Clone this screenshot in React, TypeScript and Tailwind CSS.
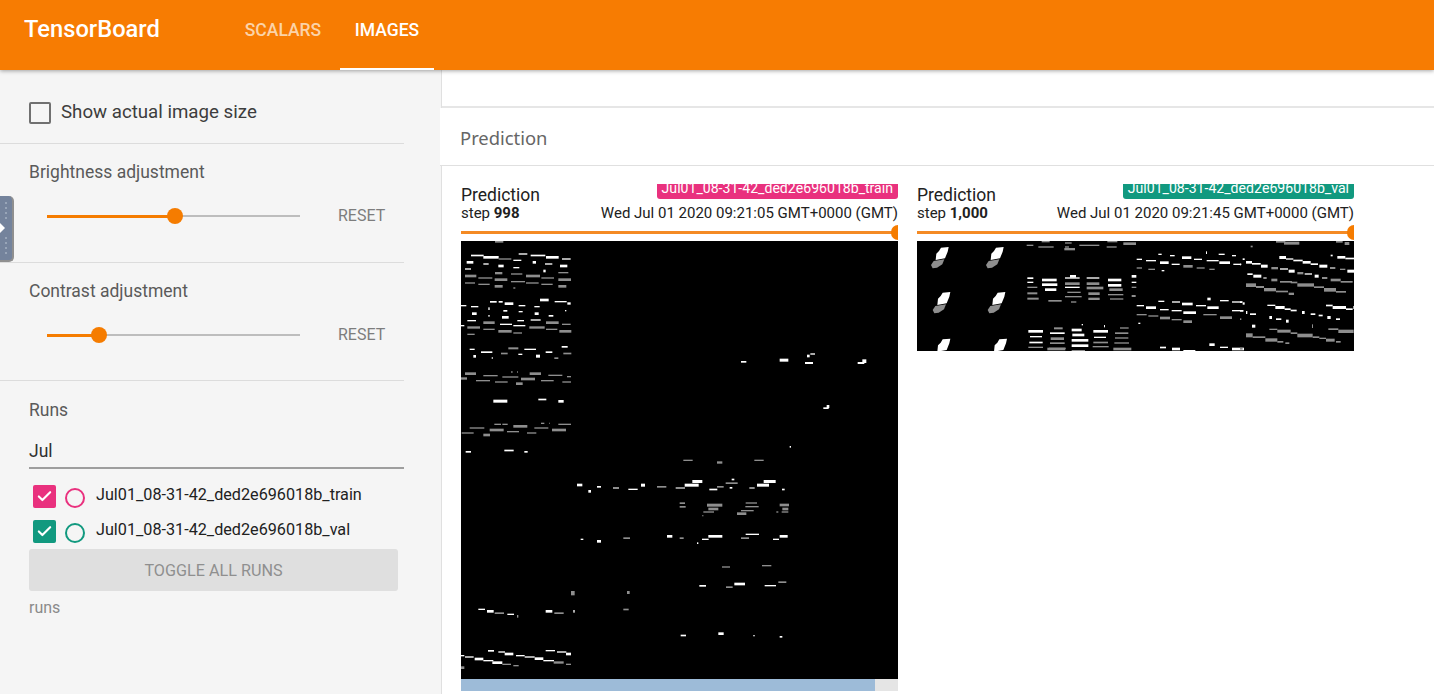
import { Check } from 'lucide-react'

type Dash = [number, number, number, number, number?]

// dashes are measured on 3x crops of the picture, so each list is scaled down by a group transform
const leftTop: Dash[] = [
  [165,423,25,4,1],[93,464,38,4],[130,468,46,7],[176,475,38,3,1],[236,460,26,3],[272,464,44,4],[318,468,38,7],[366,475,26,3],[220,479,24,3],
  [80,483,20,7],[130,490,16,3],[175,494,16,7],[278,483,10,7],[315,490,22,3],[360,494,22,7],[75,505,18,3],[220,501,18,3],[310,509,7,7],
  [75,524,34,7,1],[115,532,42,3,1],[165,516,22,6,1],[213,520,34,3,1],[258,524,42,7,1],[304,532,38,3,1],[355,516,30,3,1],[164,535,38,7,1],
  [355,535,38,7,1],[213,543,42,3,1],[75,547,30,3,1],[115,551,34,3,1],[258,547,38,3,1],[304,551,34,3,1],[164,555,24,7,1],[355,555,24,7,1],[220,562,6,3,1],
  [300,596,26,7],[150,603,20,4],[176,603,12,4],[194,607,26,7],[344,603,36,3],[382,607,10,6],[63,615,16,3],[93,618,22,3],[236,615,20,3],[283,618,16,3],
  [145,622,4,7],[190,630,12,4],[236,633,12,3],[96,637,14,7],[284,637,12,7],[375,630,4,3],[326,645,14,4],[145,645,4,4],[186,648,20,7],
  [82,660,26,3],[232,660,20,3],[130,664,34,7,1],[272,658,30,3],[318,664,38,7,1],[180,671,36,3],[220,675,36,3],[366,671,26,3,1],[63,675,10,3],
  [82,679,38,6,1],[268,679,46,6,1],[130,686,34,3,1],[318,686,34,3,1],[175,690,40,7,1],[358,690,36,7,1],[220,697,26,3,1],[82,701,22,3,1],
]

const leftBottom: Dash[] = [
  [44,26,15,3],[78,34,34,4],[138,38,20,4,1],[160,22,30,5,1],[190,41,12,3],[208,26,35,3],[272,34,20,4],[320,18,18,4],[325,38,24,4,1],[55,45,8,7],[110,52,4,3],[243,44,12,8],[298,52,12,4,1],
  [30,97,33,7,1],[85,105,43,3,1],[142,109,48,3,1],[168,94,5,3,1],[186,94,3,3,1],[224,97,34,7,1],[280,104,42,3,1],[336,108,12,3,1],[18,112,18,6,1],[63,120,42,3,1],[120,124,38,3,1],[183,127,20,7,1],[198,113,42,7,1],[258,120,38,3,1],[322,124,26,3,1],
  [115,179,42,8],[250,176,24,4],[310,180,16,7],
  [118,251,20,3,1],[142,251,16,3,1],[258,248,10,3,1],[282,248,2,3,1],[310,251,38,3,1],[175,255,42,7,1],[44,262,44,3,1],[238,262,42,3,1],[104,266,42,7,1],[291,266,42,7,1],[156,273,36,3,1],[20,277,36,3,1],[216,277,28,3,1],[85,281,20,7,1],
  [32,333,16,4],[148,329,28,4],[208,333,10,4],
  [858,63,16,4],[974,56,26,8],[1056,44,8,7],[1066,40,14,3],[1050,66,24,5],[1208,66,20,5],[1222,58,12,10],[1105,202,16,4],[1115,195,8,8],[1004,318,4,4],
  [685,359,28,3,1],[786,364,16,6,1],[898,359,28,3,1],
  [366,431,16,7],[400,450,8,7],[426,438,12,4],[474,441,18,5,1],[520,446,28,3],[558,431,12,8],[606,438,28,4,1],[662,441,28,5,1],[689,431,42,8],[712,420,30,8],[763,446,24,4],[786,438,20,4,1],[812,427,36,4,1],[830,416,8,4],[824,441,8,4],[883,441,16,5,1],[906,431,36,8],[926,420,36,8],[981,446,8,4],
  [674,487,16,4,1],[674,498,18,4,1],[756,491,46,8,1],[760,503,30,7,1],[745,514,32,3,1],[742,525,3,3,1],[872,487,34,3,1],[871,498,40,3,1],[858,510,38,3,1],[846,517,28,7,1],[974,491,28,7,1],[982,503,18,7,1],[980,514,20,3,1],[964,514,6,3,1],
  [377,596,8,3],[426,600,12,7],[505,592,20,4,1],[636,585,16,7],[674,592,12,4,1],[741,596,20,3],[760,585,42,7],[726,607,4,4],[858,592,24,4,1],[872,581,40,3],[954,596,18,3],[974,585,24,7],
  [801,679,24,3,1],[921,675,28,3,1],
  [733,735,20,4],[813,739,20,4,1],[838,728,32,7],[929,735,34,3],[970,724,24,4,1],[348,753,11,12,1],[516,753,8,8,1],
  [70,806,20,3],[96,810,20,7],[119,817,28,4,1],[157,821,20,3],[186,825,4,7,1],[272,810,20,7],[298,817,28,4,1],[355,810,4,7],[505,806,16,4,1],
  [677,884,16,4],[790,877,16,7],[895,885,4,3],[974,888,8,4],
  [99,930,18,4],[130,934,20,3],[149,938,26,7],[183,945,26,3],[209,949,30,3],[239,952,26,7],[265,960,32,3],[272,930,28,3],[306,934,28,3],[333,938,15,7],[18,945,10,3],[30,949,26,3],[59,953,26,7],[85,960,30,3],[112,964,30,7],[142,971,26,3,1],[175,975,16,3,1],[296,964,30,6,1],[333,971,15,3,1],[18,979,10,7,1],
]

const rightMiddle: Dash[] = [
  [350,224,20,3,1],[385,229,46,3,1],[395,213,24,3,1],[465,217,20,3,1],[465,229,12,3,1],[463,234,32,6,1],[508,224,60,3,1],[590,229,30,3,1],[592,213,30,3,1],[640,217,38,7,1],
  [352,322,18,4],[396,326,44,7],[396,340,46,7],[405,355,34,7],[352,335,18,3],[352,350,30,3,1],[352,367,30,5,1],[352,383,34,5,1],[480,315,18,7],[465,322,44,3],[465,337,44,7,1],[465,350,44,3],[472,365,40,3,1],[465,378,50,3,1],[530,322,38,3],[530,337,38,7,1],[530,350,50,7,1],[535,367,34,7,1],[535,383,34,6,1],[594,326,40,7],[594,342,40,7],[598,355,40,7,1],[594,372,46,3,1],[600,385,40,3,1],[665,315,14,7],[665,335,14,3],[665,350,14,3,1],[665,375,12,5,1],[415,390,40,4,1],[483,394,16,3,1],
  [432,472,26,5,1],[515,462,4,3],[582,465,3,6],[630,472,26,3,1],[355,480,44,7],[420,487,44,4],[485,476,30,7],[550,480,44,7],[615,487,40,4,1],[360,498,36,3],[422,502,40,7,1],[487,491,36,7],[552,500,36,3],[615,502,40,3,1],[358,515,40,4],[420,517,44,4,1],[485,507,50,7],[550,515,44,4,1],[613,517,44,3,1],[355,530,44,3,1],[417,533,50,3,1],[485,523,50,7],[548,528,48,3,1],[610,533,54,7,1],[412,533,54,7,1],[485,540,40,3,1],
  [680,266,16,3],[708,270,30,3],[750,274,26,7],[745,251,10,3],[780,255,14,3],[816,259,28,7],[852,266,24,3],[890,270,36,3],[928,274,32,7],[926,251,18,3],[966,255,12,3],[970,281,24,3],[888,244,3,7],[680,292,16,3,1],[715,296,20,3,1],[785,281,24,3],[820,285,28,7,1],[860,292,24,3,1],[898,296,16,3,1],[755,300,8,3],
  [680,405,22,3],[708,409,30,7],[750,417,26,3],[745,392,18,3],[786,394,24,3],[816,398,32,7],[858,405,30,3],[892,409,34,7],[892,383,10,7],[930,390,26,3],[966,394,32,3],[966,420,34,3],[785,420,30,3],[820,424,38,7],[880,432,40,3,1],[930,439,36,7,1],[680,432,30,3,1],[715,436,30,3,1],[750,440,30,7,1],[785,447,30,3,1],[820,451,26,7,1],[685,458,6,3],
  [750,530,18,4],[786,533,24,7],[820,540,36,3],[898,520,16,7],[930,530,24,3],[966,533,36,7],
]

const rightSlanted: Dash[] = [
  [108,0,28,4,1],[132,2,46,8,1],[32,14,6,4,1],[288,0,20,4,1],[314,3,14,8,1],[8,52,6,4],[0,68,3,4],
  [18,60,18,7],[36,66,26,4],[63,71,20,8],[118,45,20,8],[138,52,22,3],[160,56,28,4],[188,60,24,7],[212,67,22,4],[238,71,24,8],[292,45,24,7],[316,50,30,4],[322,86,20,8],[272,41,6,4],[300,83,16,3,1],[270,78,16,5,1],[94,78,20,6,1],[120,82,24,3],[146,86,18,8],[172,93,18,6,1],[194,97,22,3],[224,101,12,8],[246,108,16,5,1],[22,97,16,4],[40,101,24,8],[70,108,10,5,1],[94,113,18,7,1],
  [18,127,30,10,1],[48,135,24,5,1],[72,141,36,9,1],[108,149,36,4,1],[146,155,16,6,1],[120,120,36,4,1],[152,122,20,4,1],[172,127,50,9,1],[222,136,30,4,1],[252,141,36,10,1],[288,150,30,4,1],[272,113,30,7,1],[302,120,36,4,1],
  [82,191,24,3],[106,195,28,8],[134,202,18,4],[152,206,18,4],[258,191,20,4],[278,195,40,8],[318,202,20,4],[340,195,5,8],[0,208,10,3],[18,210,4,8],[30,217,18,4],[186,210,8,8],[212,217,14,4],[236,221,12,4],[262,225,10,8],[288,232,12,4],[88,225,8,8],[108,232,16,4],[138,236,8,8],[36,251,10,8],[0,181,6,4],[8,184,6,6],
  [88,263,24,3,1],[112,266,40,8,1],[152,274,20,4,1],[172,278,46,10,1],[218,286,20,4,1],[238,290,20,3,1],[258,293,26,8,1],[288,300,14,4,1],[265,262,30,4,1],[295,266,46,9,1],[18,277,20,11,1],[38,286,38,4,1],[76,292,36,9,1],[112,300,18,4,1],[136,304,12,4,1],[216,250,3,10,1],[0,232,4,4,1],[0,320,8,5,1],
]

const blobOffsets = [[0, 0], [165, 0], [5, 135], [170, 135], [5, 275], [175, 275]]

function Dashes({ data, dx, dy }: { data: Dash[]; dx: number; dy: number }) {
  return (
    <g transform={`translate(${dx} ${dy}) scale(${1 / 3})`}>
      {data.map(([x, y, w, h, gray], i) => (
        <rect key={i} x={x} y={y} width={w} height={h + 1} fill={gray ? '#8e8e8e' : '#ffffff'} />
      ))}
    </g>
  )
}

function Slider({ percent }: { percent: number }) {
  return (
    <div className="flex items-center pl-[47px]">
      <div className="relative h-[2px] w-[253px] bg-[#bdbdbd]">
        <div className="h-[3px] bg-[#f57c00]" style={{ width: `${percent}%` }} />
        <div
          className="absolute top-[-7px] ml-[-8px] h-[16px] w-[16px] rounded-full bg-[#f57c00]"
          style={{ left: `${percent}%` }}
        />
      </div>
      <span className="ml-[38px] text-[16px] text-[#7d7d7d]">RESET</span>
    </div>
  )
}

function RunRow({ name, color, ring }: { name: string; color: string; ring: string }) {
  return (
    <div className="flex h-[35px] items-center pl-[4px]">
      <div className={`mt-[4px] flex h-[23px] w-[23px] items-center justify-center rounded-[2px] ${color}`}>
        <Check size={17} strokeWidth={3} color="#ffffff" />
      </div>
      <div className={`ml-[9px] mt-[6px] h-[20px] w-[20px] rounded-full border-2 ${ring}`} />
      <span className="ml-[11px] mt-[2px] text-[16.2px] leading-none text-[#212121]">{name}</span>
    </div>
  )
}

function ImageCard({
  run,
  tag,
  step,
  time,
  showBar,
  height,
  children,
}: {
  run: string
  tag: string
  step: string
  time: string
  showBar: boolean
  height: string
  children: React.ReactNode
}) {
  return (
    <div className="w-[437px]">
      <div className="flex h-[57px] flex-col">
        <div className="flex h-[21px] justify-between">
          <span className="text-[17.5px] leading-[22px] text-[#212121]">Prediction</span>
          <span className={`h-[15px] overflow-hidden rounded-b-[3px] px-[5px] text-[14.1px] leading-[9px] text-white ${tag}`}>
            {run}
          </span>
        </div>
        <div className="flex justify-between text-[15px] leading-[16px] text-[#212121]">
          <span>
            step <b className="font-bold">{step}</b>
          </span>
          <span>{time}</span>
        </div>
        <div className="relative mt-[10px] h-[3px] bg-[#f48a24]">
          <div className="absolute right-0 top-[-6px] h-[15px] w-[7px] rounded-l-full bg-[#f57c00]" />
        </div>
      </div>
      <div className={`bg-black ${height}`}>{children}</div>
      {showBar && (
        <div className="flex h-[12px] bg-[#e5e5e5]">
          <div className="w-[414px] bg-[#9dbbd8]" />
        </div>
      )}
    </div>
  )
}

export default function App() {
  return (
    <div className="relative flex h-[694px] flex-col overflow-hidden bg-white font-['Roboto',sans-serif]">
      <header className="z-10 flex h-[70px] shrink-0 items-stretch bg-[#f77c02] pl-[24px] shadow-[0_1px_4px_rgba(0,0,0,0.35)]">
        <div className="flex w-[136px] items-center pb-[10px] text-[23.7px] font-medium text-white">TensorBoard</div>
        <nav className="ml-[80px] flex">
          <div className="flex w-[86px] items-center justify-center pb-[10px] text-[17.5px] font-medium text-[#fbd3a8]">
            SCALARS
          </div>
          <div className="ml-[14px] flex w-[94px] items-center justify-center border-b-2 border-white pb-[8px] text-[17.5px] font-medium text-white">
            IMAGES
          </div>
        </nav>
      </header>

      <div className="flex min-h-0 flex-1">
        <aside className="w-[442px] shrink-0 border-r border-[#e0e0e0] bg-[#f5f5f5] pr-[37px]">
          <section className="flex h-[74px] items-center border-b border-[#dcdcdc] pl-[29px] pt-[12px]">
            <div className="h-[22px] w-[22px] rounded-[2px] border-2 border-[#707070]" />
            <span className="ml-[10px] text-[18.7px] text-[#3d3d3d]">Show actual image size</span>
          </section>
          <section className="h-[119px] border-b border-[#dcdcdc] pl-[29px] pt-[17px]">
            <div className="text-[17.5px] leading-[22px] text-[#5a5a5a]">Brightness adjustment</div>
          </section>
          <section className="h-[118px] border-b border-[#dcdcdc] pl-[29px] pt-[17px]">
            <div className="text-[17.5px] leading-[22px] text-[#5a5a5a]">Contrast adjustment</div>
          </section>
          <section className="pl-[29px] pt-[18px]">
            <div className="text-[17.5px] leading-[22px] text-[#5a5a5a]">Runs</div>
            <div className="mt-[18px] flex h-[30px] items-center border-b-2 border-[#9e9e9e] pb-[4px] text-[17.5px] text-[#303030]">
              Jul
            </div>
            <div className="mt-[8px]">
              <RunRow name="Jul01_08-31-42_ded2e696018b_train" color="bg-[#e9317e]" ring="border-[#e9317e]" />
              <RunRow name="Jul01_08-31-42_ded2e696018b_val" color="bg-[#11997f]" ring="border-[#11997f]" />
            </div>
            <div className="mr-[6px] mt-[2px] flex h-[42px] items-center justify-center rounded-[3px] bg-[#dfdfdf] pt-[2px] text-[16.2px] text-[#8f8f8f]">
              TOGGLE ALL RUNS
            </div>
            <div className="mt-[5px] text-[16px] text-[#8a8a8a]">runs</div>
          </section>
        </aside>

        <main className="min-w-0 flex-1 bg-white">
          <div className="h-[38px] border-b-2 border-[#e6e6e6]" />
          <div className="relative -ml-[2px] flex h-[58px] items-center border-b border-[#e0e0e0] bg-white pl-[20px] pt-[2px] font-['Noto_Sans',sans-serif] text-[18.4px] text-[#666666]">
            Prediction
          </div>
          <div className="flex gap-[19px] pl-[19px] pt-[18px]">
            <ImageCard
              run="Jul01_08-31-42_ded2e696018b_train"
              tag="bg-[#e9317e]"
              step="998"
              time="Wed Jul 01 2020 09:21:05 GMT+0000 (GMT)"
              showBar
              height="h-[438px]"
            >
              <svg width={437} height={438} className="block">
                <Dashes data={leftTop} dx={-21} dy={-141} />
                <Dashes data={leftBottom} dx={-6} dy={99} />
              </svg>
            </ImageCard>
            <ImageCard
              run="Jul01_08-31-42_ded2e696018b_val"
              tag="bg-[#11997f]"
              step="1,000"
              time="Wed Jul 01 2020 09:21:45 GMT+0000 (GMT)"
              showBar={false}
              height="h-[110px]"
            >
              <svg width={437} height={110} className="block overflow-hidden">
                <g transform={`scale(${1 / 3})`}>
                  {blobOffsets.map(([x, y], i) => (
                    <g key={i} transform={`translate(${x} ${y})`}>
                      <polygon points="72,20 95,18 92,32 84,52 56,57 58,38 66,30" fill="#ffffff" />
                      <polygon points="50,60 82,55 76,70 60,80 47,82 42,72" fill="#8e8e8e" />
                    </g>
                  ))}
                </g>
                <Dashes data={rightMiddle} dx={-7} dy={-71} />
                <Dashes data={rightSlanted} dx={323} dy={0} />
              </svg>
            </ImageCard>
          </div>
        </main>
      </div>

      {/* sliders sit over the sidebar sections at their measured rows */}
      <div className="absolute left-0 top-[204px] w-[404px]">
        <Slider percent={50.5} />
      </div>
      <div className="absolute left-0 top-[323px] w-[404px]">
        <Slider percent={20.5} />
      </div>

      {/* drawer handle */}
      <div className="absolute left-0 top-[196px] flex h-[66px] w-[14px] flex-col items-center justify-center gap-[3px] rounded-r-[5px] border-b-2 border-r-2 border-[#8f8f8f] bg-[#74839c]">
        {[0, 1, 2, 3].map(i => (
          <div key={i} className="h-[2px] w-[2px] bg-[#98a5b8]" />
        ))}
        <svg width={6} height={10} viewBox="0 0 6 10" className="my-[1px] self-start">
          <path d="M0 0 L5 5 L0 10 Z" fill="#ffffff" />
        </svg>
        {[0, 1, 2, 3].map(i => (
          <div key={i} className="h-[2px] w-[2px] bg-[#98a5b8]" />
        ))}
      </div>
    </div>
  )
}
